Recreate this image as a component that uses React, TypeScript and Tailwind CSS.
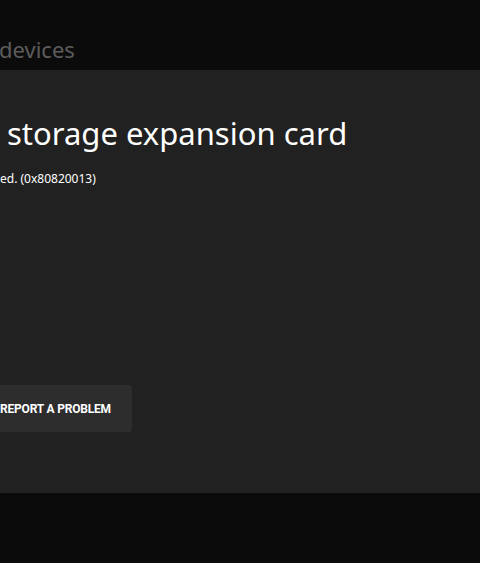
export default function App() {
  return (
    <div className="h-[563px] w-[480px] overflow-hidden bg-[#0b0b0b] flex flex-col" style={{ fontFamily: '"Noto Sans", "Open Sans", sans-serif' }}>
      <div className="h-[70px] shrink-0 pt-[35px]">
        <div className="text-[22px] leading-[28px] text-[#5c5c5c] ml-[-1px]">devices</div>
      </div>
      <div className="h-[423px] shrink-0 bg-[#212121] flex flex-col">
        <h1 className="mt-[42px] pl-[7px] text-[31px] leading-[42px] text-white whitespace-nowrap">storage expansion card</h1>
        <p className="mt-[16px] text-[12px] leading-[18px] text-white whitespace-nowrap">ed. (0x80820013)</p>
        <div className="mt-[197px] ml-[-20px] w-[152px] h-[47px] rounded-[3px] bg-[#2d2d2d] flex items-center pl-[20px]">
          <span className="text-[12px] font-bold text-white tracking-[-0.2px]" style={{ fontFamily: 'Roboto, sans-serif' }}>REPORT A PROBLEM</span>
        </div>
      </div>
    </div>
  );
}
